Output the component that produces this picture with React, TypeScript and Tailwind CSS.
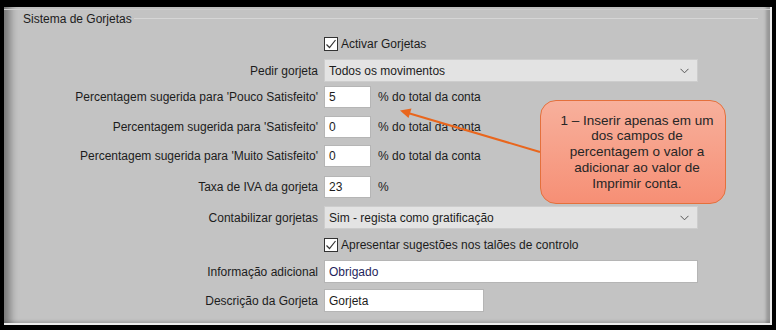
import React from "react";

const labelCls = "w-[314px] shrink-0 text-right text-[12px] leading-[14px] text-[#1c1c1c]";

function Row({ label, className, children }: { label?: string; className?: string; children: React.ReactNode }) {
  return (
    <div className={"flex items-center " + (className ?? "")}>
      <div className={labelCls}>{label}</div>
      <div className="ml-[6px] flex items-center">{children}</div>
    </div>
  );
}

function Check({ label }: { label: string }) {
  return (
    <div className="flex items-center">
      <span className="flex h-[14px] w-[14px] items-center justify-center border border-[#333] bg-white">
        <svg width="12" height="12" viewBox="0 0 12 12">
          <path d="M1.5 6.5 L4.5 9.5 L10.5 2" fill="none" stroke="#333" strokeWidth="1.2" />
        </svg>
      </span>
      <span className="ml-[3px] text-[12px] leading-[14px] text-[#1c1c1c]">{label}</span>
    </div>
  );
}

function Select({ value }: { value: string }) {
  return (
    <div className="flex h-[23px] w-[374px] items-center justify-between border border-[#cdcdcd] bg-[#e3e3e3] pl-[4px] pr-[8px] text-[12px] text-[#1c1c1c]">
      <span>{value}</span>
      <svg width="9" height="6" viewBox="0 0 9 6">
        <path d="M0.5 0.8 L4.5 4.8 L8.5 0.8" fill="none" stroke="#555" strokeWidth="1" />
      </svg>
    </div>
  );
}

function Input({ value, w, color = "text-[#1c1c1c]" }: { value: string; w: string; color?: string }) {
  return (
    <div className={"flex h-[22px] items-center border border-[#b5b5b5] bg-white pl-[4px] text-[12px] " + w + " " + color}>
      {value}
    </div>
  );
}

const unit = "ml-[7px] text-[12px] text-[#1c1c1c]";

export default function App() {
  return (
    <div className="h-[330px] w-[776px] bg-black pb-[5px] pl-[4px] pr-[4px] pt-[7px] font-['Liberation_Sans',Arial,sans-serif]">
      <div className="relative h-full border-b-[2px] border-r-[2px] border-[#ececec] bg-[#c3c3c3] shadow-[inset_13px_0_9px_-7px_rgba(0,0,0,0.4),inset_-9px_0_3px_-5px_rgba(0,0,0,0.22),inset_0_-4px_3px_-2px_rgba(0,0,0,0.15)]">
        <div className="h-[3px] border-b border-[#cfcfcf]" />
        <div className="mt-[2px] flex items-center pl-[19px] pr-[12px]">
          <span className="text-[12px] leading-[14px] text-[#1c1c1c]">Sistema de Gorjetas</span>
          <div className="ml-[2px] h-[2px] flex-1 border-t border-[#d6d6d6] border-b-[#bdbdbd]" />
        </div>

        <Row className="mt-[10px] h-[16px]">
          <Check label="Activar Gorjetas" />
        </Row>
        <Row className="mt-[7px]" label="Pedir gorjeta">
          <Select value="Todos os movimentos" />
        </Row>
        <Row className="mt-[4px]" label="Percentagem sugerida para 'Pouco Satisfeito'">
          <Input value="5" w="w-[47px]" />
          <span className={unit}>% do total da conta</span>
        </Row>
        <Row className="mt-[8px]" label="Percentagem sugerida para 'Satisfeito'">
          <Input value="0" w="w-[47px]" />
          <span className={unit}>% do total da conta</span>
        </Row>
        <Row className="mt-[7px]" label="Percentagem sugerida para 'Muito Satisfeito'">
          <Input value="0" w="w-[47px]" />
          <span className={unit}>% do total da conta</span>
        </Row>
        <Row className="mt-[9px]" label="Taxa de IVA da gorjeta">
          <Input value="23" w="w-[47px]" />
          <span className={unit}>%</span>
        </Row>
        <Row className="mt-[8px]" label="Contabilizar gorjetas">
          <Select value="Sim - regista como gratificação" />
        </Row>
        <Row className="mt-[8px] h-[16px]">
          <Check label="Apresentar sugestões nos talões de controlo" />
        </Row>
        <Row className="mt-[7px]" label="Informação adicional">
          <Input value="Obrigado" w="w-[374px] h-[23px]" color="text-[#1f1f5c]" />
        </Row>
        <Row className="mt-[6px]" label="Descrição da Gorjeta">
          <Input value="Gorjeta" w="w-[160px] h-[23px]" />
        </Row>

        <svg className="absolute left-0 top-0" width="768" height="318" viewBox="0 0 768 318">
          <line x1="536" y1="145" x2="404" y2="106" stroke="#e9661d" strokeWidth="2" />
          <path d="M396 103.5 L407.5 101.5 L404.5 111 Z" fill="#e9661d" />
        </svg>

        <div className="absolute left-[536px] top-[93px] flex h-[104px] w-[186px] flex-col items-center justify-center rounded-[16px] border-[1.5px] border-[#e4703c] bg-gradient-to-b from-[#f7b09c] to-[#f68f75] pl-[8px] text-center text-[13.5px] leading-[15.7px] text-[#262626]">
          <span>1 – Inserir apenas em um</span>
          <span>dos campos de</span>
          <span>percentagem o valor a</span>
          <span>adicionar ao valor de</span>
          <span>Imprimir conta.</span>
        </div>
      </div>
    </div>
  );
}
